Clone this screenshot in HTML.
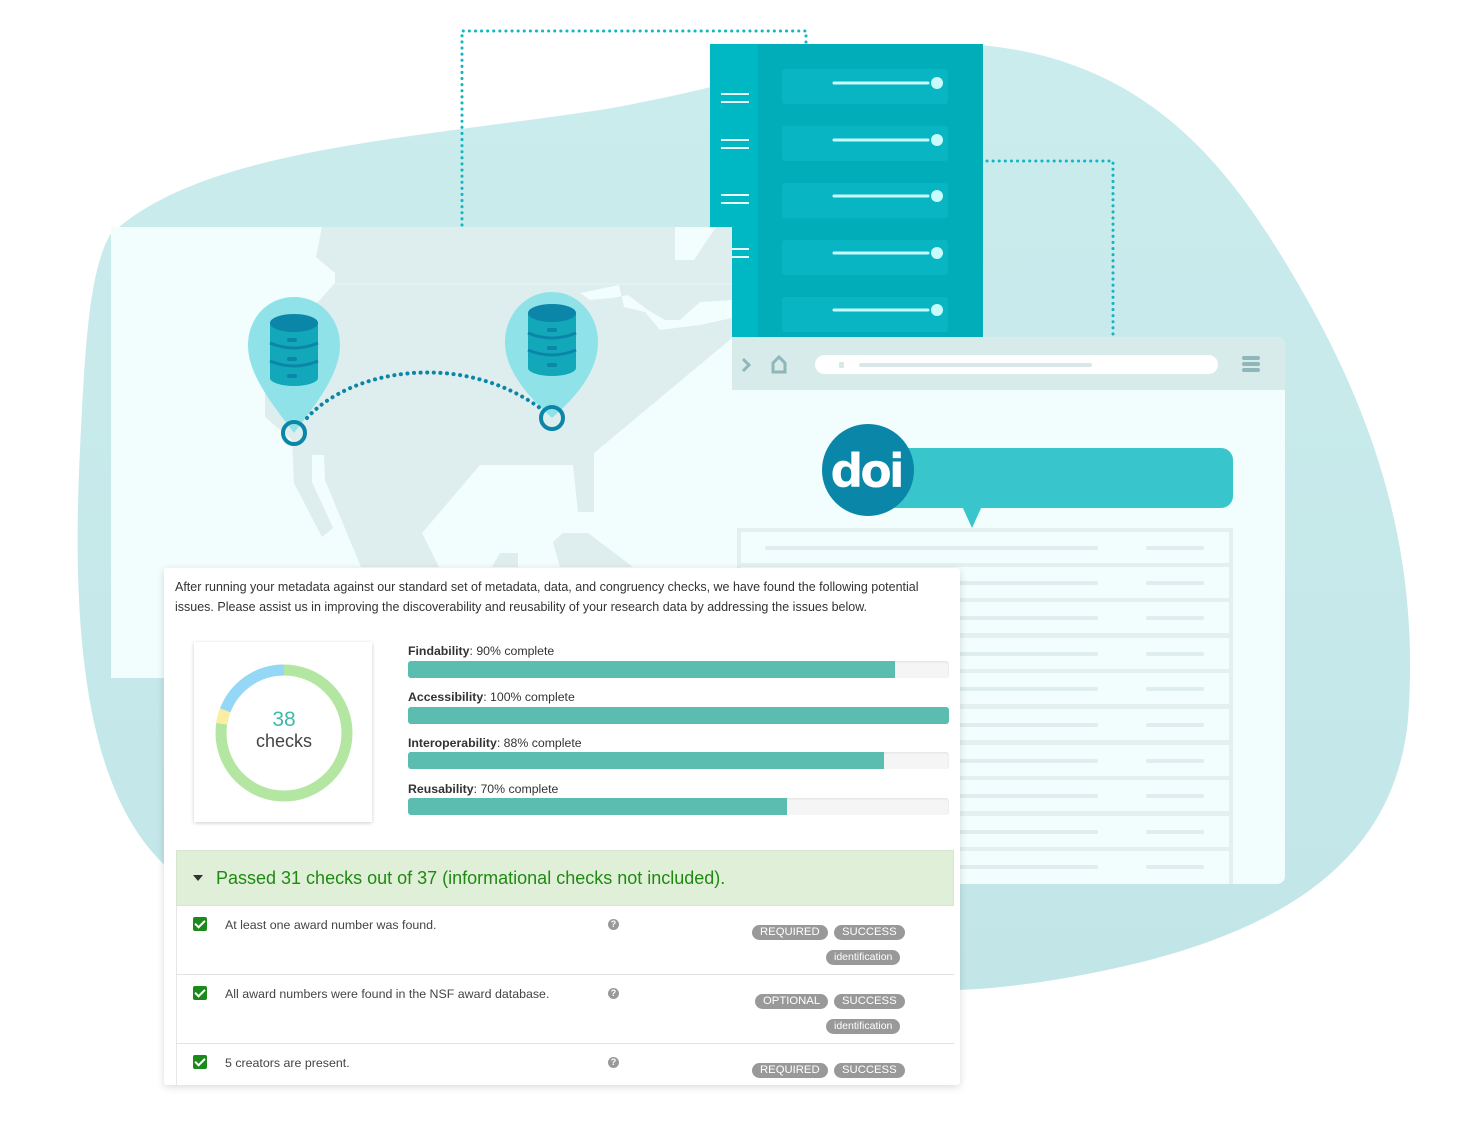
<!DOCTYPE html>
<html><head><meta charset="utf-8"><style>
*{margin:0;padding:0;box-sizing:border-box}
body{width:1465px;height:1147px;background:#fff;position:relative;overflow:hidden;font-family:"Liberation Sans",Arial,sans-serif}
.abs{position:absolute}
#rep{left:164px;top:568px;width:796px;height:517px;background:#fff;box-shadow:0 2px 8px rgba(0,0,0,.15);border-radius:3px;overflow:hidden}
.intro{position:absolute;left:11px;top:10px;width:780px;font-size:12.5px;line-height:19.5px;color:#333}
.donutbox{position:absolute;left:30px;top:74px;width:178px;height:180px;background:#fff;box-shadow:0 1px 4px rgba(0,0,0,.2)}
.lbl{position:absolute;left:244px;font-size:12.3px;color:#333}
.bar{position:absolute;left:244px;width:541px;height:17px;background:#f5f5f5;border-radius:3px;overflow:hidden;box-shadow:inset 0 1px 2px rgba(0,0,0,.08)}
.bar i{display:block;height:100%;background:#5bbdb0}
.hdr{position:absolute;left:12px;top:282px;width:778px;height:56px;background:#e0efd8;border:1px solid #d6e6cf;color:#1f8a12;font-size:18px;line-height:54px;padding-left:39px}
.hdr:before{content:"";position:absolute;left:16px;top:24px;border-left:5px solid transparent;border-right:5px solid transparent;border-top:6px solid #333}
.row{position:absolute;left:12px;width:778px;height:69px;border-bottom:1px solid #e3e3e3;border-left:1px solid #e6e6e6;font-size:12.4px;color:#444}
.cb{position:absolute;left:16px;top:11px;width:14px;height:14px;background:#1a8a1a;border-radius:2px}
.cb:after{content:"";position:absolute;left:4px;top:1px;width:4px;height:8px;border:solid #fff;border-width:0 2px 2px 0;transform:rotate(45deg)}
.rt{position:absolute;left:48px;top:12px}
.q{position:absolute;left:431px;top:13px;width:11px;height:11px;border-radius:50%;background:#999;color:#fff;font-size:9px;line-height:11px;text-align:center;font-weight:bold}
.pill{position:absolute;height:15px;line-height:15px;border-radius:8px;background:#999;color:#fff;font-size:11.3px;padding:0 8px}
</style></head><body>
<svg class="abs" style="left:0;top:0" width="1465" height="1147">
<defs>
<linearGradient id="bl" x1="0" y1="0" x2="0" y2="1"><stop offset="0" stop-color="#cbeced"/><stop offset="1" stop-color="#c2e6e8"/></linearGradient>
</defs>
<path d="M110,235 C200,150 400,140 600,110 C750,85 850,40 980,45 C1150,60 1230,170 1290,270 C1380,420 1420,560 1408,720 C1395,850 1300,920 1150,960 C1050,985 980,990 950,990 L170,870 C90,800 70,650 80,450 C85,340 90,270 110,235 Z" fill="url(#bl)"/>
<g fill="none" stroke="#12b5c2" stroke-width="3" stroke-dasharray="0.1 6" stroke-linecap="round">
<path d="M462,225 V31 H806 V44"/>
<path d="M987,161 H1113 V337"/>
</g>
<!-- server -->
<rect x="710" y="44" width="273" height="293" fill="#00adb9"/>
<rect x="710" y="44" width="48" height="293" fill="#00b7c4"/>
<g stroke="#e6fbfb" stroke-width="2">
<path d="M721,94 H749 M721,102 H749 M721,140 H749 M721,148 H749 M721,195 H749 M721,203 H749 M721,249 H749 M721,257 H749"/>
</g>
<g fill="#08b6c3">
<rect x="782" y="69" width="166" height="35" rx="3"/><rect x="782" y="126" width="166" height="35" rx="3"/><rect x="782" y="183" width="166" height="35" rx="3"/><rect x="782" y="240" width="166" height="35" rx="3"/><rect x="782" y="297" width="166" height="35" rx="3"/>
</g>
<g stroke="#c8fbfb" stroke-width="3" stroke-linecap="round"><path d="M834,83 H928 M834,140 H928 M834,196 H928 M834,253 H928 M834,310 H928"/></g>
<g fill="#c8fbfb"><circle cx="937" cy="83" r="6"/><circle cx="937" cy="140" r="6"/><circle cx="937" cy="196" r="6"/><circle cx="937" cy="253" r="6"/><circle cx="937" cy="310" r="6"/></g>
<!-- browser -->
<rect x="728" y="337" width="557" height="547" rx="8" fill="#f2fdfd"/>
<path d="M728,345 a8,8 0 0 1 8,-8 H1277 a8,8 0 0 1 8,8 V390 H728 Z" fill="#d8ebeb"/>
<path d="M743,359 l6,6 l-6,6" stroke="#8fb7ba" stroke-width="3" fill="none"/>
<path d="M773,372 V363 l6,-6 l6,6 V372 Z" fill="none" stroke="#8fb7ba" stroke-width="3"/>
<rect x="815" y="355" width="403" height="19" rx="9.5" fill="#fff"/>
<rect x="839" y="362" width="5" height="6" rx="1" fill="#d8e8e8"/>
<rect x="859" y="363" width="233" height="4" rx="2" fill="#d8e8e8"/>
<g fill="#8fb7ba"><rect x="1242" y="356" width="18" height="4" rx="2"/><rect x="1242" y="362" width="18" height="4" rx="2"/><rect x="1242" y="368" width="18" height="4" rx="2"/></g>
<rect x="880" y="448" width="353" height="60" rx="12" fill="#38c5cb"/>
<path d="M962,506 L972,528 L982,506 Z" fill="#38c5cb"/>
<circle cx="868" cy="470" r="46" fill="#0a86a8"/>
<text x="866" y="487" text-anchor="middle" font-family="DejaVu Sans,sans-serif" font-weight="bold" font-size="46" fill="#fff" letter-spacing="-3">doi</text>
<rect x="737" y="528" width="496" height="356" fill="#e3f0f0"/>
<g fill="#f2fdfd">
<rect x="741" y="532" width="488" height="31"/><rect x="741" y="567" width="488" height="31"/><rect x="741" y="602" width="488" height="31"/><rect x="741" y="638" width="488" height="31"/><rect x="741" y="673" width="488" height="31"/><rect x="741" y="709" width="488" height="31"/><rect x="741" y="745" width="488" height="31"/><rect x="741" y="780" width="488" height="31"/><rect x="741" y="816" width="488" height="31"/><rect x="741" y="851" width="488" height="33"/>
</g>
<g stroke="#deeded" stroke-width="4" stroke-linecap="round">
<path d="M767,548 H1096 M1148,548 H1202 M767,583 H1096 M1148,583 H1202 M767,618 H1096 M1148,618 H1202 M767,654 H1096 M1148,654 H1202 M767,689 H1096 M1148,689 H1202 M767,725 H1096 M1148,725 H1202 M767,761 H1096 M1148,761 H1202 M767,796 H1096 M1148,796 H1202 M767,832 H1096 M1148,832 H1202 M767,867 H1096 M1148,867 H1202"/>
</g>
<!-- map -->
<rect x="111" y="227" width="621" height="451" fill="#f2fdfd"/>
<g fill="#deeded">
<path d="M322,227 L675,227 L675,260 L694,260 L716,227 L732,227 L732,338 L594,453 L594,512 L578,512 L573,465 L480,465 L422,533 L439,567 L361,567 L325,480 L324,455 L312,455 L312,482 L333,528 L322,537 L294,483 L292,440 L265,417 L265,320 L318,302 L335,283 L335,273 L316,257 Z"/>
<path d="M553,542 L563,533 L588,533 L633,567 L560,567 Z"/>
<path d="M492,567 L500,553 L518,553 L518,567 Z"/>
</g>
<g fill="#f2fdfd">
<path d="M306,269 L313,261 L326,273 L326,283 L318,283 Z"/>
<path d="M580,293 L619,285 L624,307 L645,312 L660,330 L700,325 L732,318 L732,300 L700,302 L680,320 L665,320 L648,310 L628,295 L612,298 L590,300 Z"/>
</g>
<path d="M335,284 H732" stroke="#e8f5f5" stroke-width="1"/>
<path d="M248,345 C248,318 268,297 294,297 C320,297 340,318 340,345 C340,375 315,405 294,433 C273,405 248,375 248,345 Z" fill="#8fe3e8"/>
<path d="M505,342 C505,315 525,292 552,292 C578,292 598,315 598,342 C598,372 575,398 552,418 C530,398 505,372 505,342 Z" fill="#8fe3e8"/>
<g>
<rect x="270" y="323" width="48" height="55" fill="#13a7ba"/>
<ellipse cx="294" cy="323" rx="24" ry="9" fill="#0b86a8"/>
<ellipse cx="294" cy="378" rx="24" ry="8" fill="#13a7ba"/>
<path d="M270,343 q24,10 48,0 M270,361 q24,10 48,0" stroke="#0b86a8" stroke-width="3" fill="none"/>
<rect x="287" y="338" width="10" height="4" rx="2" fill="#0b86a8"/><rect x="287" y="357" width="10" height="4" rx="2" fill="#0b86a8"/><rect x="287" y="374" width="10" height="4" rx="2" fill="#0b86a8"/>
<rect x="528" y="313" width="48" height="55" fill="#13a7ba"/>
<ellipse cx="552" cy="313" rx="24" ry="9" fill="#0b86a8"/>
<ellipse cx="552" cy="368" rx="24" ry="8" fill="#13a7ba"/>
<path d="M528,333 q24,10 48,0 M528,350 q24,10 48,0" stroke="#0b86a8" stroke-width="3" fill="none"/>
<rect x="547" y="328" width="10" height="4" rx="2" fill="#0b86a8"/><rect x="547" y="346" width="10" height="4" rx="2" fill="#0b86a8"/><rect x="547" y="363" width="10" height="4" rx="2" fill="#0b86a8"/>
</g>
<path d="M307,418 C350,370 460,350 540,408" fill="none" stroke="#0b86a8" stroke-width="4" stroke-dasharray="0.1 6.5" stroke-linecap="round"/>
<circle cx="294" cy="433" r="11" fill="none" stroke="#0b86a8" stroke-width="4"/>
<circle cx="552" cy="418" r="11" fill="none" stroke="#0b86a8" stroke-width="4"/>
</svg>

<div id="rep" class="abs">
<div class="intro">After running your metadata against our standard set of metadata, data, and congruency checks, we have found the following potential issues. Please assist us in improving the discoverability and reusability of your research data by addressing the issues below.</div>
<div class="donutbox">
<svg width="178" height="180"><g transform="rotate(-90 90 91)">
<circle cx="90" cy="91" r="63" fill="none" stroke="#b3e6a0" stroke-width="11"/>
<circle cx="90" cy="91" r="63" fill="none" stroke="#fbeea0" stroke-width="11" stroke-dasharray="0 306 14 400"/>
<circle cx="90" cy="91" r="63" fill="none" stroke="#95d7f7" stroke-width="11" stroke-dasharray="0 320 76 400"/>
</g>
<text x="90" y="84" text-anchor="middle" font-size="21" fill="#3fb9a8" font-family="Liberation Sans,sans-serif">38</text>
<text x="90" y="105" text-anchor="middle" font-size="18" fill="#444" font-family="Liberation Sans,sans-serif">checks</text></svg>
</div>
<div class="lbl" style="top:76px"><b>Findability</b>: 90% complete</div>
<div class="bar" style="top:93px"><i style="width:90%"></i></div>
<div class="lbl" style="top:122px"><b>Accessibility</b>: 100% complete</div>
<div class="bar" style="top:139px"><i style="width:100%"></i></div>
<div class="lbl" style="top:168px"><b>Interoperability</b>: 88% complete</div>
<div class="bar" style="top:184px"><i style="width:88%"></i></div>
<div class="lbl" style="top:214px"><b>Reusability</b>: 70% complete</div>
<div class="bar" style="top:230px"><i style="width:70%"></i></div>
<div class="hdr">Passed 31 checks out of 37 (informational checks not included).</div>
<div class="row" style="top:338px"><div class="cb"></div><div class="rt">At least one award number was found.</div><div class="q">?</div>
<div class="pill" style="left:575px;top:19px">REQUIRED</div><div class="pill" style="left:657px;top:19px">SUCCESS</div><div class="pill" style="left:649px;top:44px;font-size:10.5px">identification</div></div>
<div class="row" style="top:407px"><div class="cb"></div><div class="rt">All award numbers were found in the NSF award database.</div><div class="q">?</div>
<div class="pill" style="left:578px;top:19px">OPTIONAL</div><div class="pill" style="left:657px;top:19px">SUCCESS</div><div class="pill" style="left:649px;top:44px;font-size:10.5px">identification</div></div>
<div class="row" style="top:476px;border-bottom:none"><div class="cb"></div><div class="rt">5 creators are present.</div><div class="q">?</div>
<div class="pill" style="left:575px;top:19px">REQUIRED</div><div class="pill" style="left:657px;top:19px">SUCCESS</div></div>
</div>
</body></html>
